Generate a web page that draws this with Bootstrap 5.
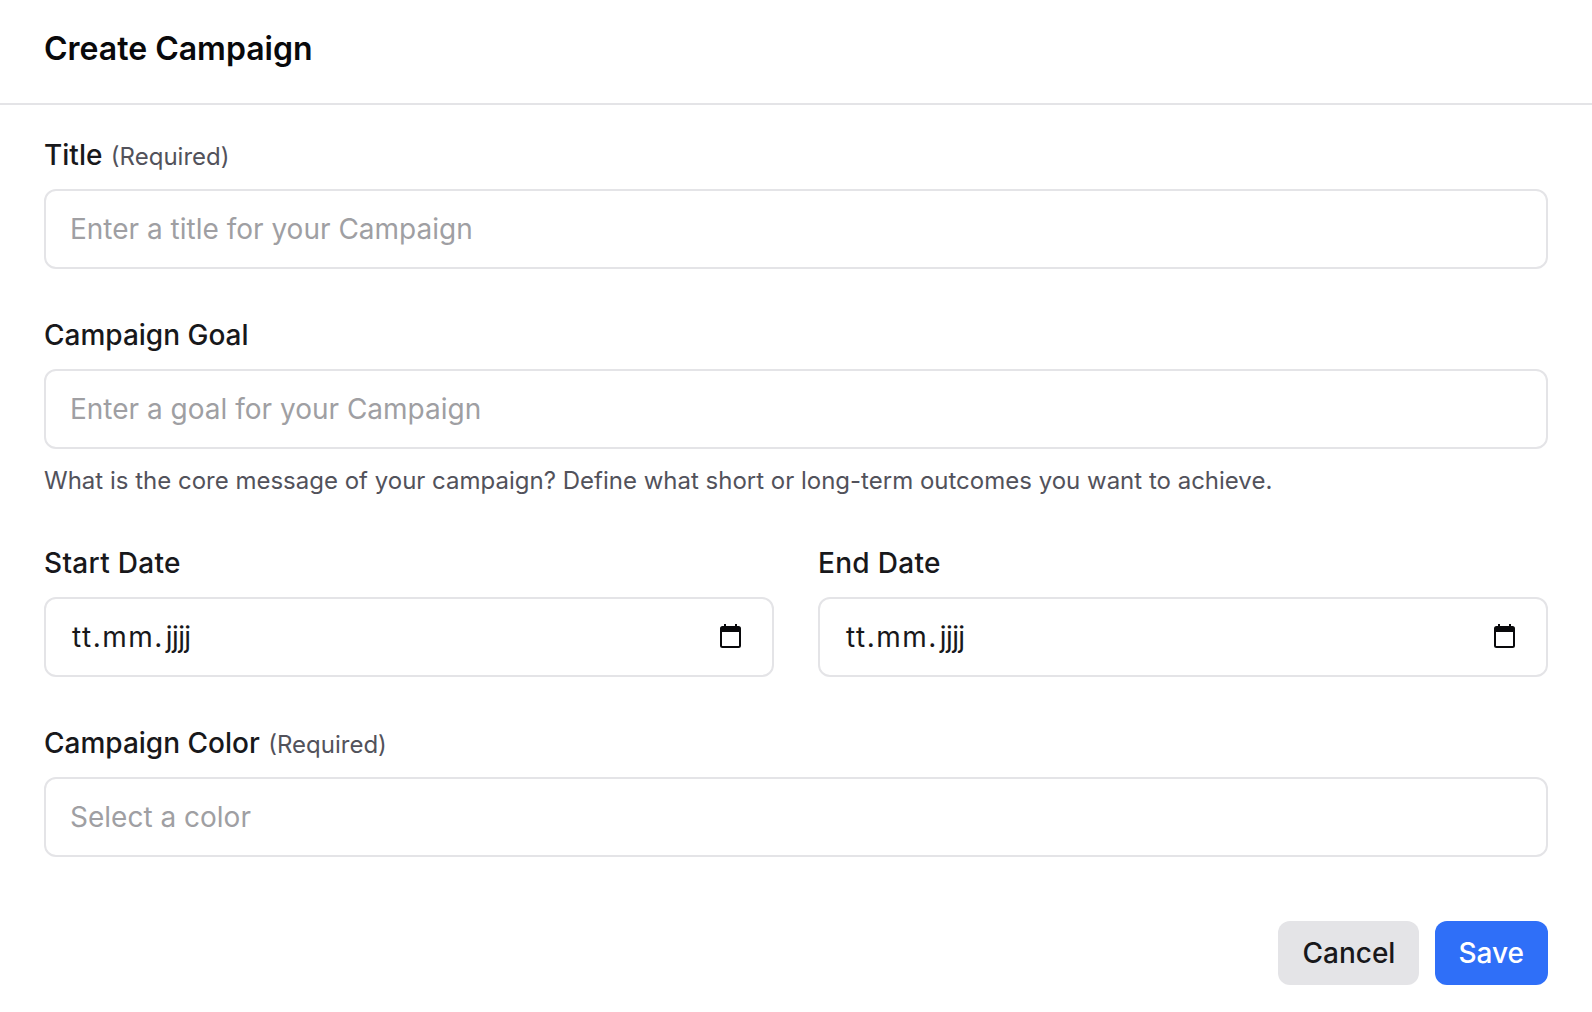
<!DOCTYPE html>
<html lang="de">
<head>
<meta charset="utf-8">
<title>Create Campaign</title>
<link href="https://cdn.jsdelivr.net/npm/bootstrap@5.3.0/dist/css/bootstrap.min.css" rel="stylesheet">
<style>
html, body { background: #fff; font-family: Inter, "Liberation Sans", sans-serif; color: #18181b; }
.dlg-head { height: 105px; padding: 0 44px 5px; border-bottom: 2px solid #e4e4e7; display: flex; align-items: center; }
.dlg-title { font-family: inherit; font-size: 32px; font-weight: 600; line-height: 40px; color: #09090b; margin: 0; }
.dlg-body { padding: 30px 44px 0; }
.fld { margin-bottom: 46px; }
.form-label { font-size: 28px; font-weight: 500; line-height: 40px; margin-bottom: 14px; color: #18181b; display: block; }
.form-label small { font-size: 24px; font-weight: 400; color: #52525b; margin-left: 1px; line-height: 1; }
.form-control { height: 80px; font-size: 28px; padding: 0 24px; border: 2px solid #e4e4e7; border-radius: 12px; color: #18181b; }
.form-control::placeholder { color: #9f9fa3; opacity: 1; }
.date-ctl { padding-left: 26px; }
.seg-a { letter-spacing: 1.5px; }
.seg-b { letter-spacing: -.6px; margin-left: 2px; }
.cal-ico { position: absolute; right: 33px; top: 27px; width: 21px; height: 24px; }
.form-text { font-size: 24px; line-height: 32px; margin-top: 16px; color: #52525b; }
.date-row { --bs-gutter-x: 44px; }
.date-row .form-label { letter-spacing: .3px; }
.dlg-foot { display: flex; justify-content: flex-end; gap: 16px; margin-top: 64px; }
.btn-act { height: 64px; font-size: 28px; font-weight: 500; border-radius: 12px; padding: 0 24px; border: 0; }
.btn-cancel { background: #e4e4e7; color: #18181b; }
.btn-save { background: #2f6ff8; color: #fff; padding-left: 23px; }
</style>
</head>
<body>
<div class="dlg-head"><h1 class="dlg-title">Create Campaign</h1></div>
<form class="dlg-body">
  <div class="fld">
    <label class="form-label" for="t">Title <small>(Required)</small></label>
    <input class="form-control" id="t" type="text" placeholder="Enter a title for your Campaign">
  </div>
  <div class="fld">
    <label class="form-label" for="g">Campaign Goal</label>
    <input class="form-control" id="g" type="text" placeholder="Enter a goal for your Campaign">
    <div class="form-text">What is the core message of your campaign? Define what short or long-term outcomes you want to achieve.</div>
  </div>
  <div class="row date-row fld">
    <div class="col-6">
      <div class="form-label">Start Date</div>
      <div class="position-relative">
        <div class="form-control date-ctl d-flex align-items-center"><span class="seg-a">tt.mm.</span><span class="seg-b">jjjj</span></div>
        <svg class="cal-ico" viewBox="0 0 21 24"><path d="M4 0h2v2h9V0h2v2h1.500A2.500 2.500 0 0 1 21 4.500v17a2.500 2.500 0 0 1-2.500 2.500h-16A2.500 2.500 0 0 1 0 21.500v-17A2.500 2.500 0 0 1 2.500 2H4zM2 8v13.500a.5.5 0 0 0 .5.5h16a.5.5 0 0 0 .5-.5V8z" fill="#09090b" fill-rule="evenodd"/></svg>
      </div>
    </div>
    <div class="col-6">
      <div class="form-label">End Date</div>
      <div class="position-relative">
        <div class="form-control date-ctl d-flex align-items-center"><span class="seg-a">tt.mm.</span><span class="seg-b">jjjj</span></div>
        <svg class="cal-ico" viewBox="0 0 21 24"><path d="M4 0h2v2h9V0h2v2h1.500A2.500 2.500 0 0 1 21 4.500v17a2.500 2.500 0 0 1-2.500 2.500h-16A2.500 2.500 0 0 1 0 21.500v-17A2.500 2.500 0 0 1 2.500 2H4zM2 8v13.500a.5.5 0 0 0 .5.5h16a.5.5 0 0 0 .5-.5V8z" fill="#09090b" fill-rule="evenodd"/></svg>
      </div>
    </div>
  </div>
  <div>
    <label class="form-label" for="c">Campaign Color <small>(Required)</small></label>
    <input class="form-control" id="c" type="text" placeholder="Select a color">
  </div>
  <div class="dlg-foot">
    <button type="button" class="btn btn-act btn-cancel">Cancel</button>
    <button type="button" class="btn btn-act btn-save">Save</button>
  </div>
</form>
<script src="https://cdn.jsdelivr.net/npm/bootstrap@5.3.0/dist/js/bootstrap.bundle.min.js"></script>
</body>
</html>
